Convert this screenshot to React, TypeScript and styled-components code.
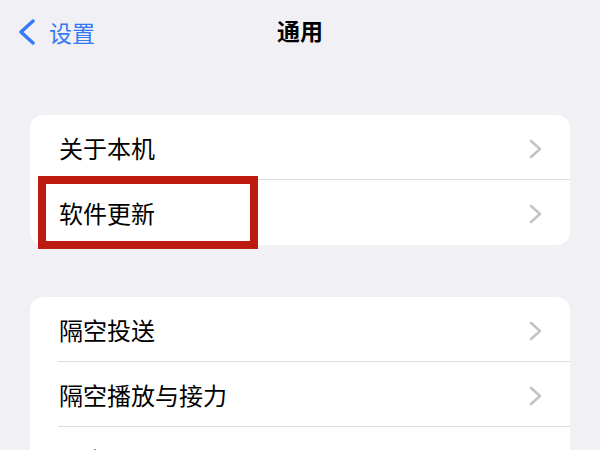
import React from "react";
import styled, { createGlobalStyle } from "styled-components";

const Global = createGlobalStyle`
  html, body { margin: 0; padding: 0; background: #f0f0f5; }
  body { font-family: "Noto Sans CJK SC", "Noto Sans", sans-serif; overflow: hidden; }
`;

const Page = styled.div`
  width: 600px;
  height: 450px;
  background: #f0f0f5;
  overflow: hidden;
`;

const NavBar = styled.div`
  position: relative;
  height: 68px;
  display: flex;
  align-items: center;
  padding-left: 18px;
  box-sizing: border-box;
`;

const Back = styled.div`
  display: flex;
  align-items: center;
  gap: 13px;
  color: #3579f6;
  font-size: 23px;
  line-height: 1;
  margin-top: -4px;
`;

const Title = styled.div`
  position: absolute;
  left: 0;
  right: 0;
  top: 0;
  height: 68px;
  display: flex;
  align-items: center;
  justify-content: center;
  font-size: 23px;
  font-weight: 700;
  color: #000;
  margin-top: -4px;
  pointer-events: none;
`;

const Groups = styled.div`
  display: flex;
  flex-direction: column;
  gap: 52px;
  padding: 47px 30px 0;
`;

const Card = styled.div`
  background: #fff;
  border-radius: 13px;
`;

const Row = styled.div<{ $last?: boolean }>`
  position: relative;
  height: 65px;
  display: flex;
  align-items: center;
  justify-content: space-between;
  padding: 0 28px 0 29px;
  box-sizing: border-box;
  &::after {
    content: "";
    display: ${(p) => (p.$last ? "none" : "block")};
    position: absolute;
    left: 28px;
    right: 0;
    bottom: 0;
    height: 1px;
    background: #dedee2;
  }
`;

const Label = styled.span`
  font-size: 24px;
  color: #000;
  line-height: 1;
  margin-top: 0px;
`;

const Highlight = styled.div`
  position: absolute;
  left: 8px;
  top: -4px;
  width: 220px;
  height: 73px;
  border: 8px solid #bd1a10;
  box-sizing: border-box;
  pointer-events: none;
`;

const Chevron = () => (
  <svg width="13" height="20" viewBox="0 0 13 20" style={{ marginTop: 2 }}>
    <polyline
      points="2,2 11,10 2,18"
      fill="none"
      stroke="#c4c4c7"
      strokeWidth="2.6"
      strokeLinecap="round"
      strokeLinejoin="round"
    />
  </svg>
);

const BackChevron = () => (
  <svg width="18" height="26" viewBox="0 0 18 26">
    <polyline
      points="15,2 3,13 15,24"
      fill="none"
      stroke="#3579f6"
      strokeWidth="3.4"
      strokeLinecap="round"
      strokeLinejoin="round"
    />
  </svg>
);

export default function App() {
  return (
    <Page>
      <Global />
      <NavBar>
        <Back>
          <BackChevron />
          <span>设置</span>
        </Back>
        <Title>通用</Title>
      </NavBar>
      <Groups>
        <Card>
          <Row>
            <Label>关于本机</Label>
            <Chevron />
          </Row>
          <Row $last>
            <Label>软件更新</Label>
            <Chevron />
            <Highlight />
          </Row>
        </Card>
        <Card>
          <Row>
            <Label>隔空投送</Label>
            <Chevron />
          </Row>
          <Row>
            <Label>隔空播放与接力</Label>
            <Chevron />
          </Row>
          <Row>
            <Label>画中画</Label>
            <Chevron />
          </Row>
        </Card>
      </Groups>
    </Page>
  );
}
